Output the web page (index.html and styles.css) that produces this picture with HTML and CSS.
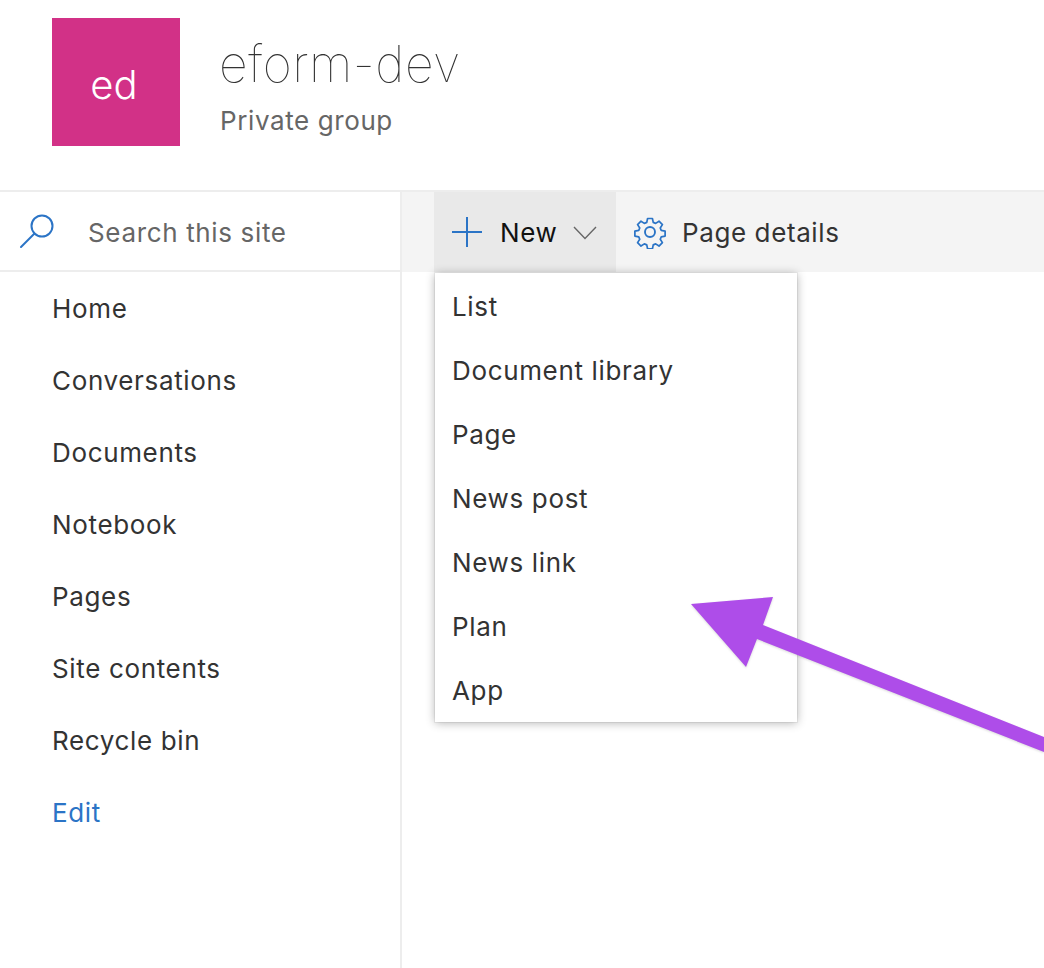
FILE: index.html
```html
<!DOCTYPE html>
<html lang="en">
<head>
<meta charset="utf-8">
<title>eform-dev</title>
<link rel="stylesheet" href="styles.css">
</head>
<body>
<div class="page">
  <header class="site-header">
    <div class="logo">ed</div>
    <div class="site-info">
      <div class="site-title">eform-dev</div>
      <div class="site-sub">Private group</div>
    </div>
  </header>
  <div class="layout">
    <aside class="sidebar">
      <div class="search">
        <svg class="search-icon" width="36" height="36" viewBox="0 0 36 36" fill="none" stroke="#2b74c6" stroke-width="2"><circle cx="24" cy="13" r="10.5"/><path d="M16.5 20.5 L3 34" stroke-linecap="round"/></svg>
        <span class="search-text">Search this site</span>
      </div>
      <nav class="nav">
        <a class="nav-item">Home</a>
        <a class="nav-item">Conversations</a>
        <a class="nav-item">Documents</a>
        <a class="nav-item">Notebook</a>
        <a class="nav-item">Pages</a>
        <a class="nav-item">Site contents</a>
        <a class="nav-item">Recycle bin</a>
        <a class="nav-item nav-edit">Edit</a>
      </nav>
    </aside>
    <main class="main">
      <div class="commandbar">
        <div class="cmd cmd-new">
          <svg class="plus" width="30" height="30" viewBox="0 0 30 30" stroke="#2b74c6" stroke-width="2" fill="none"><path d="M15 0V30M0 15H30"/></svg>
          <span class="cmd-new-label">New</span>
          <svg class="chev" width="24" height="14" viewBox="0 0 24 14" stroke="#666" stroke-width="1.4" fill="none"><path d="M1 1L12 12.5L23 1"/></svg>
        </div>
        <div class="cmd cmd-details">
          <svg class="gear" width="34" height="34" viewBox="0 0 34 34" fill="none" stroke="#2b74c6" stroke-width="1.9" stroke-linejoin="round"><circle cx="17" cy="17" r="5"/><path d="M14.3 2h5.4l.9 4.3 2.7 1.1 3.7-2.4 3.8 3.8-2.4 3.7 1.1 2.7 4.3.9v5.4l-4.3.9-1.1 2.7 2.4 3.7-3.8 3.8-3.7-2.4-2.7 1.1-.9 4.3h-5.4l-.9-4.3-2.7-1.1-3.7 2.4-3.8-3.8 2.4-3.7-1.1-2.7-4.3-.9v-5.4l4.3-.9 1.1-2.7-2.4-3.7 3.8-3.8 3.7 2.4 2.7-1.1z" transform="translate(1.7 1.7) scale(.9)"/></svg>
          <span>Page details</span>
        </div>
      </div>
      <ul class="menu">
        <li class="menu-item">List</li>
        <li class="menu-item">Document library</li>
        <li class="menu-item">Page</li>
        <li class="menu-item">News post</li>
        <li class="menu-item">News link</li>
        <li class="menu-item">Plan</li>
        <li class="menu-item">App</li>
      </ul>
    </main>
  </div>
  <svg class="arrow" width="1044" height="968" viewBox="0 0 1044 968"><polygon points="691,604 773,597 763,625 1044,737 1044,752 757,639 746,667" fill="#ae4de9"/></svg>
</div>
</body>
</html>
```
FILE: styles.css
```css
* { box-sizing: border-box; }
html, body { margin: 0; padding: 0; height: 100%; overflow: hidden; background: #fff; }
body { font-family: Inter, "Noto Sans", "Liberation Sans", sans-serif; color: #333; letter-spacing: .65px; }
.page { position: relative; height: 968px; display: flex; flex-direction: column; }

.site-header { height: 190px; display: flex; flex: none; padding: 18px 0 0 52px; }
.logo { width: 128px; height: 128px; background: #d23187; color: #fff; font-size: 40px; font-weight: 300; letter-spacing: 0; display: flex; align-items: center; justify-content: center; padding: 5px 4px 0 0; }
.site-info { margin-left: 40px; }
.site-title { font-size: 50px; font-weight: 100; line-height: 60px; margin-top: 16px; color: #333; letter-spacing: .55px; margin-left: -1px; }
.site-sub { font-size: 26px; line-height: 32px; margin-top: 11px; color: #666; letter-spacing: .6px; }

.layout { flex: 1; display: flex; border-top: 2px solid #ededed; min-height: 0; }
.sidebar { width: 402px; flex: none; border-right: 2px solid #ededed; }
.search { height: 80px; display: flex; align-items: center; border-bottom: 2px solid #ededed; padding-left: 18px; }
.search-icon { flex: none; }
.search-text { margin-left: 34px; font-size: 26px; line-height: 32px; padding-top: 4px; color: #666; }
.nav { display: flex; flex-direction: column; padding-top: 1px; }
.nav-item { height: 72px; line-height: 72px; padding-left: 52px; font-size: 26px; color: #333; }
.nav-edit { color: #2b74c6; }

.main { flex: 1; position: relative; min-width: 0; }
.commandbar { height: 80px; background: #f4f4f4; display: flex; padding-left: 32px; font-size: 26px; letter-spacing: .6px; }
.cmd { display: flex; align-items: center; height: 100%; }
.cmd-new { width: 182px; background: #e9e9e9; padding-left: 18px; }
.cmd-new-label { margin-left: 18px; color: #111; }
.chev { margin-left: 16px; margin-top: 1px; }
.cmd-details { padding-left: 17px; color: #333; }
.cmd-details span { margin-left: 15px; }

.menu { position: absolute; left: 33px; top: 81px; width: 362px; height: 449px; margin: 0; padding: 2px 0 0; list-style: none; background: #fff; box-shadow: 0 0 0 1px rgba(0,0,0,.05), 0 1px 9px rgba(0,0,0,.3); }
.menu-item { height: 64px; line-height: 64px; padding-left: 17px; font-size: 26px; color: #333; }

.arrow { position: absolute; left: 0; top: 0; pointer-events: none; filter: drop-shadow(0 1px 1px rgba(0,0,0,.15)); }
```
